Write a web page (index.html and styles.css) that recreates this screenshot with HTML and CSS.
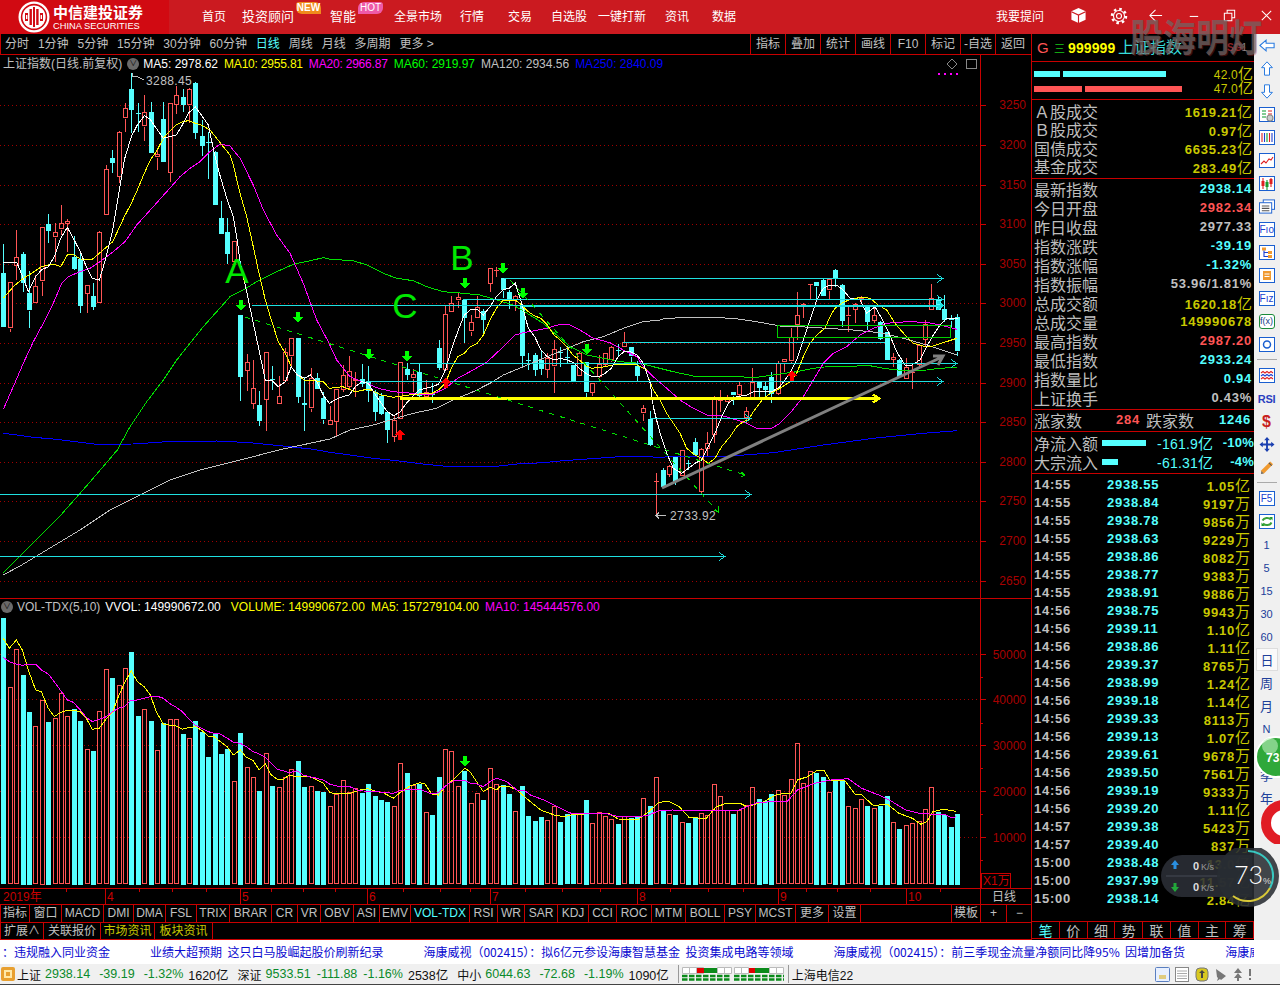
FILE: index.html
```html
<!DOCTYPE html>
<html lang="zh-CN">
<head>
<meta charset="utf-8">
<title>上证指数</title>
<link rel="stylesheet" href="styles.css">
</head>
<body>
<div class="app">
  <header class="topbar">
    <div class="brand">
      <svg class="brand-mark" viewBox="0 0 32 32">
        <circle class="bm-white" cx="16" cy="16" r="15.5"/>
        <circle class="bm-red" cx="16" cy="16" r="13.2"/>
        <circle class="bm-white" cx="16" cy="16" r="11.6"/>
        <path class="bm-red" d="M7 12h3v8H7zM11.5 8h2.4v16h-2.4zM15 6h2v20h-2zM18.2 8h2.4v16h-2.4zM22 12h3v8h-3z"/>
        <path class="bm-white" d="M8 14h1.4v4H8zM22.6 14h1.4v4h-1.4z"/>
      </svg>
      <div class="brand-text">
        <div class="brand-cn">中信建投证券</div>
        <div class="brand-en">CHINA SECURITIES</div>
      </div>
    </div>
    <nav class="nav">
      <a>首页</a>
      <a class="nav-big">投资顾问<span class="badge badge-new">NEW</span></a>
      <a class="nav-big">智能<span class="badge badge-hot">HOT</span></a>
      <a>全景市场</a><a>行情</a><a>交易</a><a>自选股</a><a>一键打新</a><a>资讯</a><a>数据</a>
    </nav>
    <div class="win-tools">
      <span class="ask">我要提问</span>
      <svg class="tool-cube" viewBox="0 0 18 18"><path class="fill-white" d="M9 1l7.5 3.6v8.8L9 17l-7.5-3.6V4.600z"/><path class="line-red" d="M1.500 5L9 8.500 16.500 5M9 8.500V17"/></svg>
      <svg class="tool-gear" viewBox="0 0 18 18"><circle class="gear-teeth" cx="9" cy="9" r="7"/><circle class="line-white" cx="9" cy="9" r="5.500"/><circle class="line-white" cx="9" cy="9" r="2.500"/></svg>
      <svg class="tool-win" viewBox="0 0 16 16"><path class="line-white" d="M15 8H2M8 2L2 8l6 6"/></svg>
      <svg class="tool-win" viewBox="0 0 16 16"><path class="line-white" d="M4 9h9"/></svg>
      <svg class="tool-win" viewBox="0 0 16 16"><path class="line-white" d="M2.500 5.500h8v8h-8zM5.500 5V2.500h8v8H11"/></svg>
      <svg class="tool-win" viewBox="0 0 16 16"><path class="line-white" d="M3 3l10 10M13 3L3 13"/></svg>
    </div>
    <div class="watermark">股海明灯</div>
  </header>

  <div class="workspace">
    <section class="chartcol">
      <div class="toolbar">
        <div class="periods">
          <span>分时</span><span>1分钟</span><span>5分钟</span><span>15分钟</span><span>30分钟</span><span>60分钟</span><span class="on">日线</span><span>周线</span><span>月线</span><span>多周期</span><span>更多 &gt;</span>
        </div>
        <div class="actions">
          <span>指标</span><span>叠加</span><span>统计</span><span>画线</span><span>F10</span><span>标记</span><span>-自选</span><span>返回</span>
        </div>
      </div>

      <div class="pane pane-price">
        <svg id="price" class="chart" viewBox="0 55 1031 544"></svg>
        <div class="legend">
          <span class="c-grey">上证指数(日线.前复权)</span>
          <i class="ball">∨</i>
          <span class="c-white">MA5: 2978.62</span>
          <span class="c-yellow tight">MA10: 2955.81</span>
          <span class="c-magenta tight">MA20: 2966.87</span>
          <span class="c-green">MA60: 2919.97</span>
          <span class="c-grey">MA120: 2934.56</span>
          <span class="c-blue">MA250: 2840.09</span>
        </div>
      </div>

      <div class="pane pane-vol">
        <svg id="vol" class="chart" viewBox="0 599 1031 305"></svg>
        <div class="legend legend-vol">
          <i class="ball">∨</i>
          <span class="c-grey vol-name">VOL-TDX(5,10)</span>
          <span class="c-white">VVOL: 149990672.00</span>
          <span class="c-yellow gap-l">VOLUME: 149990672.00</span>
          <span class="c-yellow">MA5: 157279104.00</span>
          <span class="c-magenta">MA10: 145444576.00</span>
        </div>
      </div>

      <div class="tabs tabs-index">
        <span>指标</span><span>窗口</span><span>MACD</span><span>DMI</span><span>DMA</span><span>FSL</span><span>TRIX</span><span>BRAR</span><span>CR</span><span>VR</span><span>OBV</span><span>ASI</span><span>EMV</span><span class="on">VOL-TDX</span><span>RSI</span><span>WR</span><span>SAR</span><span>KDJ</span><span>CCI</span><span>ROC</span><span>MTM</span><span>BOLL</span><span>PSY</span><span>MCST</span><span>更多</span><span>设置</span><span class="blank"></span><span>模板</span><span>+</span><span>−</span>
      </div>
      <div class="tabs tabs-ext">
        <span>扩展∧</span><span>关联报价</span><span class="warn">市场资讯</span><span class="warn">板块资讯</span>
      </div>
    </section>

    <aside class="quote">
      <div class="q-head">
        <span class="q-g">G</span>
        <span class="q-menu">三</span>
        <span class="q-code">999999</span>
        <span class="q-name">上证指数</span>
        <span class="q-sg">SG<b>1</b></span>
      </div>
      <div class="q-bars">
        <div class="q-barrow">
          <i class="bar bar-c w26"></i><i class="bar bar-c w103"></i><span class="yel">42.0<u>亿</u></span>
        </div>
        <div class="q-barrow">
          <i class="bar bar-r w48"></i><i class="bar bar-r w97"></i><span class="yel">47.0<u>亿</u></span>
        </div>
      </div>
      <div class="q-sec q-sec-a">
        <div class="qr"><label>Ａ股成交</label><span class="yel">1619.21<u>亿</u></span></div>
        <div class="qr"><label>Ｂ股成交</label><span class="yel">0.97<u>亿</u></span></div>
        <div class="qr"><label>国债成交</label><span class="yel">6635.23<u>亿</u></span></div>
        <div class="qr"><label>基金成交</label><span class="yel">283.49<u>亿</u></span></div>
      </div>
      <div class="q-sec q-sec-b">
        <div class="qr"><label>最新指数</label><span class="cya">2938.14</span></div>
        <div class="qr"><label>今日开盘</label><span class="red">2982.34</span></div>
        <div class="qr"><label>昨日收盘</label><span class="gry">2977.33</span></div>
        <div class="qr"><label>指数涨跌</label><span class="cya">-39.19</span></div>
        <div class="qr"><label>指数涨幅</label><span class="cya">-1.32%</span></div>
        <div class="qr"><label>指数振幅</label><span class="gry">53.96/1.81%</span></div>
        <div class="qr"><label>总成交额</label><span class="yel">1620.18<u>亿</u></span></div>
        <div class="qr"><label>总成交量</label><span class="yel">149990678</span></div>
        <div class="qr"><label>最高指数</label><span class="red">2987.20</span></div>
        <div class="qr"><label>最低指数</label><span class="cya">2933.24</span></div>
        <div class="qr"><label>指数量比</label><span class="cya">0.94</span></div>
        <div class="qr"><label>上证换手</label><span class="gry">0.43%</span></div>
      </div>
      <div class="q-sec q-family">
        <label>涨家数</label><span class="red fam-up">284</span><label class="fam-lab">跌家数</label><span class="cya fam-dn">1246</span>
      </div>
      <div class="q-sec q-flow">
        <div class="fr"><label>净流入额</label><i class="bar bar-c w44"></i><span class="cya fv">-161.9<u>亿</u></span><span class="cya fp">-10%</span></div>
        <div class="fr"><label>大宗流入</label><i class="bar bar-c w16"></i><span class="cya fv">-61.31<u>亿</u></span><span class="cya fp">-4%</span></div>
      </div>
      <div class="ticks">
        <div class="tk"><b>14:55</b><em>2938.55</em><span>1.05<u>亿</u></span></div>
        <div class="tk"><b>14:55</b><em>2938.84</em><span>9197<u>万</u></span></div>
        <div class="tk"><b>14:55</b><em>2938.78</em><span>9856<u>万</u></span></div>
        <div class="tk"><b>14:55</b><em>2938.63</em><span>9229<u>万</u></span></div>
        <div class="tk"><b>14:55</b><em>2938.86</em><span>8082<u>万</u></span></div>
        <div class="tk"><b>14:55</b><em>2938.77</em><span>9383<u>万</u></span></div>
        <div class="tk"><b>14:55</b><em>2938.91</em><span>9886<u>万</u></span></div>
        <div class="tk"><b>14:56</b><em>2938.75</em><span>9943<u>万</u></span></div>
        <div class="tk"><b>14:56</b><em>2939.11</em><span>1.10<u>亿</u></span></div>
        <div class="tk"><b>14:56</b><em>2938.86</em><span>1.11<u>亿</u></span></div>
        <div class="tk"><b>14:56</b><em>2939.37</em><span>8765<u>万</u></span></div>
        <div class="tk"><b>14:56</b><em>2938.99</em><span>1.24<u>亿</u></span></div>
        <div class="tk"><b>14:56</b><em>2939.18</em><span>1.14<u>亿</u></span></div>
        <div class="tk"><b>14:56</b><em>2939.33</em><span>8113<u>万</u></span></div>
        <div class="tk"><b>14:56</b><em>2939.13</em><span>1.07<u>亿</u></span></div>
        <div class="tk"><b>14:56</b><em>2939.61</em><span>9678<u>万</u></span></div>
        <div class="tk"><b>14:56</b><em>2939.50</em><span>7561<u>万</u></span></div>
        <div class="tk"><b>14:56</b><em>2939.19</em><span>9333<u>万</u></span></div>
        <div class="tk"><b>14:56</b><em>2939.20</em><span>1.11<u>亿</u></span></div>
        <div class="tk"><b>14:57</b><em>2939.38</em><span>5423<u>万</u></span></div>
        <div class="tk"><b>14:57</b><em>2939.40</em><span>837<u>万</u></span></div>
        <div class="tk"><b>15:00</b><em>2938.48</em><span>13.0<u>亿</u></span></div>
        <div class="tk"><b>15:00</b><em>2937.99</em><span>11.57<u>亿</u></span></div>
        <div class="tk"><b>15:00</b><em>2938.14</em><span>2.84<u>亿</u></span></div>
      </div>
      <div class="q-tabs"><span class="on">笔</span><span>价</span><span>细</span><span>势</span><span>联</span><span>值</span><span>主</span><span>筹</span></div>
    </aside>

    <aside class="rail">
      <div class="ri"><svg class="ic" viewBox="0 0 18 16"><path class="arrow-o" d="M1 8l7-6v3.500h9v5H8V14z"/></svg></div>
      <div class="ri"><svg class="ic" viewBox="0 0 16 18"><path class="arrow-o" d="M8 1l6.500 7H11v9H5V8H1.500z"/></svg></div>
      <div class="ri"><svg class="ic" viewBox="0 0 16 18"><path class="arrow-o" d="M8 17l6.500-7H11V1H5v9H1.500z"/></svg></div>
      <div class="ri"><svg class="ic" viewBox="0 0 16 15"><rect class="box" x=".5" y=".5" width="15" height="14"/><path class="s-green" d="M3 4h4M3 7h4M3 10h4"/><path class="s-red" d="M9 4h4M9 7h4"/><circle class="s-grey" cx="11" cy="11" r="3"/></svg></div>
      <div class="ri"><svg class="ic" viewBox="0 0 16 15"><rect class="box" x=".5" y=".5" width="15" height="14"/><path class="s-red" d="M3 3v9"/><path class="s-blue" d="M5.500 3v9"/><path class="s-green" d="M8 3v9"/><path class="s-red" d="M10.500 3v9"/><path class="s-blue" d="M13 3v9"/></svg></div>
      <div class="ri"><svg class="ic" viewBox="0 0 16 15"><rect class="box" x=".5" y=".5" width="15" height="14"/><path class="s-red" d="M2 11l3-3 2 2 3-4 2 1 2-3"/></svg></div>
      <div class="ri"><svg class="ic" viewBox="0 0 16 15"><rect class="box" x=".5" y=".5" width="15" height="14"/><path class="s-red" d="M4 2v11M12 2v9"/><path class="s-green" d="M8 4v10"/><rect class="f-red" x="2.500" y="5" width="3" height="5"/><rect class="f-green" x="6.500" y="6" width="3" height="5"/><rect class="f-red" x="10.500" y="3" width="3" height="5"/></svg></div>
      <div class="ri"><svg class="ic" viewBox="0 0 17 15"><rect class="box" x="4.500" y=".5" width="12" height="10"/><rect class="box" x=".5" y="3.500" width="13" height="11"/><path class="s-dark" d="M3 7h8M3 9.500h8M3 12h8"/></svg></div>
      <div class="ri"><span class="tbox">Fıo</span></div>
      <div class="ri"><svg class="ic" viewBox="0 0 16 15"><rect class="box" x=".5" y=".5" width="15" height="14"/><rect class="f-orange" x="3" y="2.500" width="4" height="3"/><rect class="f-orange" x="9" y="6" width="4" height="3"/><rect class="f-orange" x="9" y="10" width="4" height="3"/><path class="s-blue" d="M5 5.500v6h4M5 7.500h4"/></svg></div>
      <div class="ri"><svg class="ic" viewBox="0 0 16 15"><rect class="box" x=".5" y=".5" width="15" height="14"/><rect class="f-orange" x="4" y="3" width="8" height="9"/><path class="s-white" d="M5.500 6h5M5.500 8.500h5"/></svg></div>
      <div class="ri"><span class="tbox">Fız</span></div>
      <div class="ri"><span class="tbox tbox-fx">f(x)</span></div>
      <div class="ri"><svg class="ic" viewBox="0 0 16 15"><rect class="box" x=".5" y=".5" width="15" height="14"/><circle class="s-blue-w" cx="8" cy="7.500" r="3.500"/></svg></div>
      <div class="rsep"></div>
      <div class="ri"><svg class="ic" viewBox="0 0 16 15"><rect class="box" x=".5" y=".5" width="15" height="14"/><path class="s-red" d="M2 5l2-1.500 2 1.500 2-1.500 2 1.500 2-1.500 2 1.500"/><path class="s-blue" d="M2 8l2-1.500 2 1.500 2-1.500 2 1.500 2-1.500 2 1.500"/><path class="s-red" d="M2 11l2-1.500 2 1.500 2-1.500 2 1.500 2-1.500 2 1.500"/></svg></div>
      <div class="ri"><span class="rsi">RSI</span></div>
      <div class="ri"><span class="dollar">$</span></div>
      <div class="ri"><svg class="ic" viewBox="0 0 16 16"><path class="f-navy" d="M8 0l3 3.500H9V7h3.500V5L16 8l-3.500 3V9H9v3.500h2L8 16l-3-3.500h2V9H3.500v2L0 8l3.500-3v2H7V3.500H5z"/></svg></div>
      <div class="ri"><svg class="ic" viewBox="0 0 16 16"><path class="f-orange" d="M11.500 1.500l3 3L5 14l-3.500.8.500-3.800z"/><path class="s-dark" d="M10 3l3 3"/><path class="f-grey" d="M1.500 14.800l.4-3 2.800 2.600z"/></svg></div>
      <div class="rsep"></div>
      <div class="ri"><span class="tbox">F5</span></div>
      <div class="ri"><svg class="ic" viewBox="0 0 16 15"><rect class="box" x=".5" y=".5" width="15" height="14"/><path class="s-refresh" d="M3.500 6.500C5 3.500 9.500 3 12 5.500M12.500 8.500C11 11.500 6.500 12 4 9.500"/><path class="f-green" d="M10.500 3h3v3.500zM5.500 12h-3V8.500z"/></svg></div>
      <div class="ri rtxt">1</div>
      <div class="ri rtxt">5</div>
      <div class="ri rtxt">15</div>
      <div class="ri rtxt">30</div>
      <div class="ri rtxt">60</div>
      <div class="ri rtxt rcn rsel">日</div>
      <div class="ri rtxt rcn">周</div>
      <div class="ri rtxt rcn">月</div>
      <div class="ri rtxt">N</div>
      <div class="ri"></div>
      <div class="ri rtxt rcn">季</div>
      <div class="ri rtxt rcn">年</div>
    </aside>
  </div>

  <div class="ticker">
    <div class="ticker-track">
      <span>：违规融入同业资金</span>
      <span>业绩大超预期&nbsp;&nbsp;这只白马股崛起股价刷新纪录</span>
      <span>海康威视（002415）：拟6亿元参设海康智慧基金&nbsp;&nbsp;投资集成电路等领域</span>
      <span>海康威视（002415）：前三季现金流量净额同比降95%&nbsp;&nbsp;因增加备货</span>
      <span>海康威视</span>
    </div>
  </div>

  <footer class="status">
    <svg class="st-logo" viewBox="0 0 14 14"><rect class="st-logo-bg" width="14" height="14" rx="2"/><rect class="st-logo-in" x="3" y="3" width="8" height="8"/><rect class="st-logo-bg" x="5" y="5" width="4" height="4"/></svg>
    <span class="st-k first">上证</span><span class="st-g">2938.14</span><span class="st-g">-39.19</span><span class="st-g">-1.32%</span><span class="st-a">1620亿</span>
    <span class="st-k">深证</span><span class="st-g">9533.51</span><span class="st-g st-n">-111.88</span><span class="st-g st-n">-1.16%</span><span class="st-a">2538亿</span>
    <span class="st-k">中小</span><span class="st-g">6044.63</span><span class="st-g">-72.68</span><span class="st-g">-1.19%</span><span class="st-a">1090亿</span>
    <i class="st-sep"></i>
    <svg class="st-mini" viewBox="0 0 102 16">
      <path class="mini-box" d="M.5 1.500h7v6h-7zM7.500 1.500h7v6h-7zM14.500 1.500h7v6h-7zM35.500 1.500h7v6h-7zM42.500 1.500h7v6h-7zM52.500 1.500h7v6h-7zM59.500 1.500h7v6h-7zM87.500 1.500h7v6h-7zM94.500 1.500h7v6h-7z"/>
      <rect class="mini-red" x="15" y="2" width="7" height="5"/><rect class="mini-green" x="22" y="2" width="13" height="5"/>
      <rect class="mini-red" x="67" y="2" width="6" height="5"/><rect class="mini-green" x="73" y="2" width="14" height="5"/>
      <path class="mini-dash" d="M0 10h49M52 10h50M0 13.500h49M52 13.500h50"/>
    </svg>
    <i class="st-sep st-sep2"></i>
    <span class="st-news">上海电信22</span>
    <div class="st-icons">
      <svg viewBox="0 0 15 15"><rect class="st-doc" x=".5" y=".5" width="14" height="14" rx="1"/><path class="st-mark" d="M4 9h7M4 11h7"/></svg>
      <svg viewBox="0 0 15 15"><rect class="st-page" x=".5" y=".5" width="13" height="14"/><path class="st-rule" d="M2 4h10M2 6.500h10M2 9h10M2 11.500h10"/></svg>
      <svg viewBox="0 0 14 15"><rect class="st-coin" x="1" y="1" width="12" height="13" rx="4"/><path class="st-coin-in" d="M7 3l3 3H8v5H6V6H4z"/></svg>
      <svg viewBox="0 0 14 15"><path class="st-dish" d="M2 2l10 7-5 4-1-1-3 2 1-3-1-1z"/></svg>
      <svg viewBox="0 0 10 15"><path class="st-dish" d="M5 1l4 5H1zM5 6l4 5H1zM4 11h2v3H4z"/></svg>
      <svg viewBox="0 0 4 15"><path class="st-dish" d="M1 2h2v7H1zM1 11h2v2H1z"/></svg>
    </div>
  </footer>

  <svg class="netmeter" viewBox="0 0 120 62">
    <path class="nm-pill" d="M22 7h70v42H22a21 21 0 0 1 0-42z"/>
    <path class="nm-div" d="M6 28h54"/>
    <path class="nm-up" d="M15 12l4 5h-2.500v4h-3v-4H11z"/>
    <path class="nm-dn" d="M15 44l4-5h-2.500v-4h-3v4H11z"/>
    <text class="nm-num" x="33" y="22">0</text><text class="nm-unit" x="41" y="22">K/s</text>
    <text class="nm-num" x="33" y="43">0</text><text class="nm-unit" x="41" y="43">K/s</text>
    <circle class="nm-disc" cx="88" cy="28" r="31"/>
    <path class="nm-arc-c" d="M88 3a25 25 0 0 1 22 37"/>
    <path class="nm-arc-y" d="M110 40a25 25 0 0 1-37 8"/>
    <text class="nm-big" x="74" y="36">73</text><text class="nm-pct" x="103" y="36">%</text>
  </svg>
  <svg class="railball" viewBox="0 0 26 110">
    <circle class="rb-green" cx="22" cy="23" r="20"/>
    <circle class="rb-gloss" cx="16" cy="12" r="8"/>
    <text class="rb-txt" x="12" y="28">73</text>
    <circle class="rb-red" cx="30" cy="89" r="18"/>
  </svg>
</div>
<script src="script.js"></script>
</body>
</html>
```
FILE: styles.css
```css
* { box-sizing: border-box; }
html, body { margin: 0; padding: 0; background: #000; }
body { font-family: "Liberation Sans", "Noto Sans CJK SC", sans-serif; font-size: 12px; color: #c0c0c0; }
.app { position: relative; width: 1280px; height: 985px; overflow: hidden; display: flex; flex-direction: column; }
i, em { font-style: normal; }
u { text-decoration: none; }

/* top bar */
.topbar { position: relative; height: 34px; flex: none; display: flex; background: #cb1a20; color: #fff; }
.brand { width: 169px; background: #d10a12; display: flex; padding-left: 18px; gap: 3px; align-items: center; }
.brand-mark { width: 32px; height: 32px; }
.bm-white { fill: #fff; }
.bm-red { fill: #d10a12; }
.brand-cn { font-size: 15px; line-height: 18px; font-weight: 700; white-space: nowrap; font-family: "Noto Sans CJK SC", sans-serif; }
.brand-en { font-size: 9.300px; line-height: 11px; white-space: nowrap; }
.nav { margin-left: 33px; padding-bottom: 3px; display: grid; grid-template-columns: 40px 88px 64px 66px 48px 43px 47px 67px 47px 30px; align-items: center; }
.nav a { position: relative; font-size: 12px; white-space: nowrap; }
.nav-big { font-size: 13px !important; }
.badge { position: absolute; top: -4px; left: 54px; width: 25px; height: 12px; border-radius: 3px 6px 0 6px; font-size: 10px; line-height: 12px; text-align: center; font-weight: 700; }
.badge-new { background: #f08a1c; }
.badge-hot { left: 28px; background: #ee5aa8; border-radius: 6px 3px 6px 0; font-weight: 400; }
.win-tools { margin-left: auto; width: 284px; display: grid; grid-template-columns: 74px 40px 38px 38px 36px 37px 21px; align-items: center; justify-items: start; }
.ask { font-size: 12px; white-space: nowrap; margin-top: -3px; }
.win-tools svg { display: block; margin-top: -3px; }
.tool-cube { width: 17px; height: 17px; }
.tool-gear { width: 18px; height: 18px; }
.tool-win { width: 15px; height: 15px; }
.fill-white { fill: #fff; }
.line-red { fill: none; stroke: #cb1a20; stroke-width: 1.200; }
.line-white { fill: none; stroke: #fff; stroke-width: 1.100; }
.gear-teeth { fill: none; stroke: #fff; stroke-width: 2.500; stroke-dasharray: 2.500 3; }
.watermark { position: absolute; left: 1130px; top: 11px; font-family: "Noto Sans CJK SC", sans-serif; font-size: 33px; line-height: 48px; font-weight: 700; color: rgba(110, 105, 105, .7); white-space: nowrap; text-shadow: 1px 1px 0 rgba(170, 40, 40, .35); z-index: 5; transform: scaleY(1.15); }

/* workspace */
.workspace { flex: none; height: 906px; display: flex; background: #000; }
.chartcol { width: 1032px; flex: none; display: flex; flex-direction: column; border-right: 1px solid #c80000; }
.toolbar { height: 21px; flex: none; display: flex; justify-content: space-between; border-bottom: 1px solid #c80000; border-left: 1px solid #c80000; }
.periods { display: flex; gap: 8.900px; padding-left: 4px; align-items: center; white-space: nowrap; line-height: 20px; }
.on { color: #55ffff !important; }
.actions { display: grid; grid-template-columns: repeat(8, 35px); width: 281px; }
.actions span { border-left: 1px solid #c80000; text-align: center; line-height: 20px; white-space: nowrap; }
.pane { position: relative; flex: none; }
.pane-price { height: 544px; }
.pane-vol { height: 305px; }
.chart { display: block; width: 1031px; height: 100%; shape-rendering: crispEdges; }
.legend { position: absolute; top: 0; left: 3px; display: flex; gap: 6px; line-height: 18px; white-space: nowrap; align-items: center; }
.legend-vol { left: 2px; line-height: 16px; gap: 6px; }
.tight { letter-spacing: -.2px; }
.vol-name { margin-right: -1px; }
.gap-l { margin-left: 4px; }
.ball { width: 12px; height: 12px; border-radius: 50%; background: #6a6a6a; color: #111; font-size: 8px; line-height: 12px; text-align: center; margin-left: -1px; margin-right: -2px; }
.c-grey { color: #c0c0c0; }
.c-white { color: #fff; }
.c-yellow { color: #ffff00; }
.c-magenta { color: #ff00ff; }
.c-green { color: #00ff00; }
.c-blue { color: #0000ff; }

.tabs { height: 18px; flex: none; display: grid; border-bottom: 1px solid #c80000; line-height: 17px; text-align: center; white-space: nowrap; border-left: 1px solid #c80000; }
.tabs span { border-right: 1px solid #c80000; }
.tabs-index { grid-template-columns: 29px 32px 42px 30px 32px 31px 33px 42px 26px 23px 33px 26px 31px 59px 28px 27px 33px 31px 28px 35px 34px 39px 31px 40px 33px 32px 91px 29px 26px 25px; border-top: 1px solid #c80000; border-bottom: 0; line-height: 17px; }
.tabs-index .blank { border-right-color: #c80000; }
.tabs-index span:last-child { border-right: 0; }
.tabs-ext { grid-template-columns: 43px 57px 54px 58px; border-top: 1px solid #c80000; }
.warn { color: #c8c800; }

/* quote panel */
.quote { width: 222px; flex: none; display: flex; flex-direction: column; }
.q-head { height: 28px; flex: none; display: flex; align-items: center; border-bottom: 1px solid #c80000; padding-left: 5px; position: relative; }
.q-g { color: #ff5555; font-size: 15px; width: 17px; }
.q-menu { color: #19c719; font-size: 11px; width: 14px; }
.q-code { color: #ffff00; font-weight: 700; font-size: 14px; width: 50px; letter-spacing: .1px; }
.q-name { color: #36dcdc; font-size: 16px; white-space: nowrap; margin-top: -4px; }
.q-sg { position: absolute; left: 195px; top: 8px; color: #8a2226; font-weight: 700; font-size: 10px; }
.q-sg b { color: #888; font-weight: 400; }
.q-bars { height: 38px; flex: none; border-bottom: 1px solid #c80000; padding: 4px 1px 0 2px; display: flex; flex-direction: column; gap: 0; }
.q-barrow { position: relative; height: 15px; display: flex; align-items: center; gap: 3px; }
.q-barrow .yel { position: absolute; right: 0; top: -1px; font-size: 12px; font-weight: 400; letter-spacing: .2px; line-height: 15px; }
.q-barrow:last-child .yel { top: -2px; }
.q-barrow u { font-size: 13px; }
.bar { display: block; height: 6px; flex: none; }
.bar-c { background: #55ffff; }
.bar-r { background: #ff5555; }
.w26 { width: 26px; } .w103 { width: 103px; } .w48 { width: 48px; } .w97 { width: 97px; } .w44 { width: 44px; } .w16 { width: 16px; }
.q-sec { flex: none; border-bottom: 1px solid #c80000; }
.q-sec-a { height: 79px; padding-top: 1.500px; }
.q-sec-a .qr { height: 18.500px; }
.q-sec-b { height: 231px; padding-top: 0; }
.q-sec-b .qr { height: 19px; }
.qr { display: flex; justify-content: space-between; align-items: center; padding: 0 2px 0 2px; white-space: nowrap; }
label { font-size: 16px; color: #bdbdbd; line-height: 18px; font-family: "Noto Sans CJK SC", sans-serif; font-weight: 400; }
.yel, .cya, .red, .gry { font-weight: 700; font-size: 13px; letter-spacing: .75px; }
.yel u, .cya u { font-size: 15px; font-weight: 400; letter-spacing: 0; font-family: "Noto Sans CJK SC", sans-serif; }
.yel { color: #c8c800; }
.cya { color: #55ffff; }
.red { color: #ff5555; }
.gry { color: #c0c0c0; }
.q-family { height: 22px; display: flex; align-items: center; padding: 0 0 2px 2px; position: relative; }
.fam-up { margin-left: 34px; width: 30px; }
.fam-lab { margin-left: 0; }
.fam-dn { margin-left: auto; margin-right: 3px; }
.q-flow { height: 42px; padding: 0 1px 0 2px; }
.fr { height: 19px; display: grid; grid-template-columns: 68px 54px 57px 41px; align-items: center; white-space: nowrap; }
.fv, .fp { text-align: right; font-weight: 400; font-size: 14px; letter-spacing: .2px; }
.fp { font-weight: 700; font-size: 13px; }
.ticks { flex: none; height: 447px; padding-bottom: 1px; }
.tk { height: 18px; display: grid; grid-template-columns: 73px 51px 1fr; align-items: center; padding: 0 4px 1px 2px; white-space: nowrap; font-weight: 700; font-size: 13px; letter-spacing: .75px; }
.tk b { color: #c0c0c0; }
.tk em { color: #55ffff; }
.tk span { text-align: right; color: #c8c800; }
.tk u { font-size: 15px; font-weight: 400; letter-spacing: 0; font-family: "Noto Sans CJK SC", sans-serif; }
.q-tabs { flex: none; height: 18px; display: grid; grid-template-columns: repeat(8, 1fr); border-top: 1px solid #c80000; border-bottom: 1px solid #c80000; }
.q-tabs span { border-right: 1px solid #c80000; text-align: center; font-size: 14px; line-height: 16px; font-family: "Noto Sans CJK SC", sans-serif; }

/* right rail */
.rail { width: 26px; flex: none; background: #f0f0f0; display: flex; flex-direction: column; }
.ri { height: 23px; flex: none; display: flex; align-items: center; justify-content: center; margin-left: -1px; }
.rsep { height: 8px; flex: none; position: relative; }
.rsep::after { content: ""; position: absolute; left: 3px; right: 3px; top: 3px; height: 1px; background: #aaa; }
.ic { width: 16px; height: 15px; display: block; }
.arrow-o { fill: #fff; stroke: #2b7ce0; stroke-width: 1.200; }
.box { fill: #fff; stroke: #1a5fd0; stroke-width: 1; }
.s-green, .s-red, .s-blue, .s-grey, .s-dark, .s-white, .s-refresh, .s-blue-w { fill: none; stroke-width: 1.100; }
.s-green { stroke: #0a9a2a; }
.s-red { stroke: #e02020; }
.s-blue { stroke: #1a3fd0; }
.s-grey { stroke: #888; fill: #ccc; }
.s-dark { stroke: #555; }
.s-white { stroke: #fff; }
.s-refresh { stroke: #3aa03a; stroke-width: 2; }
.s-blue-w { stroke: #1a5fd0; stroke-width: 1.500; }
.f-red { fill: #e02020; }
.f-green { fill: #1a9a2a; }
.f-orange { fill: #f09a30; }
.f-navy { fill: #1a3fb0; }
.f-grey { fill: #777; }
.tbox { display: block; width: 16px; height: 15px; background: #fff; border: 1px solid #1a5fd0; color: #1a3fd0; font-size: 10px; line-height: 13px; text-align: center; white-space: nowrap; }
.tbox-fx { border-color: #1a8a3a; border-radius: 3px; color: #123a88; font-size: 9px; }
.rsi { color: #2a3fc0; font-size: 11px; font-weight: 700; letter-spacing: -.3px; }
.dollar { color: #c8201c; font-size: 16px; font-weight: 700; line-height: 16px; }
.rtxt { color: #20409a; font-size: 11px; }
.rcn { font-size: 13px; font-family: "Noto Sans CJK SC", sans-serif; }
.rsel { background: #fafafa; margin: 0 2px; border: 1px solid #ddd; }

/* bottom */
.ticker { flex: none; height: 24px; width: 100%; background: #fff; }
.ticker-track { width: 1254px; color: #0a0ad0; display: flex; gap: 40px; padding-left: 2px; line-height: 24px; white-space: nowrap; overflow: hidden; font-family: "Noto Sans CJK SC", sans-serif; }
.status { flex: none; height: 21px; background: #f0f0f0; border-bottom: 1px solid #444; display: flex; align-items: center; padding-left: 1px; gap: 9px; white-space: nowrap; color: #111; }
.st-logo { width: 14px; height: 14px; flex: none; margin-right: -7px; }
.st-logo-bg { fill: #e8a030; }
.st-logo-in { fill: #ffe9a8; }
.st-k { color: #111; margin-right: -5px; }
.st-k.first { margin-left: 0; }
.st-g { color: #0a8a2a; font-size: 12.500px; }
.st-n { margin-left: -3px; }
.st-a { color: #111; margin-left: -4px; font-size: 12.500px; }
.st-sep { width: 1px; height: 18px; background: #999; flex: none; margin: 0 -6px 0 0; }
.st-sep2 { margin: 0 -6px 0 -5px; }
.st-mini { width: 102px; height: 16px; flex: none; }
.mini-box { fill: #fff; stroke: #bbb; stroke-width: 1; }
.mini-red { fill: #e00000; }
.mini-green { fill: #0a8a1a; }
.mini-dash { fill: none; stroke: #0a8a1a; stroke-width: 2.400; stroke-dasharray: 5.500 1.500; }
.st-news { font-size: 12px; }
.st-icons { margin-left: 293px; display: flex; align-items: center; gap: 5px; }
.st-icons svg { height: 15px; width: auto; display: block; }
.st-doc { fill: #e8f0ff; stroke: #5a7fc0; }
.st-mark { stroke: #d8a800; fill: none; }
.st-page { fill: #fff; stroke: #888; }
.st-rule { stroke: #aaa; fill: none; }
.st-coin { fill: #d8c820; stroke: #777; }
.st-coin-in { fill: #444; }
.st-dish { fill: #777; }

/* overlays */
.netmeter { position: absolute; left: 1160px; top: 848px; width: 120px; height: 62px; z-index: 6; }
.nm-pill { fill: rgba(44, 48, 56, .86); }
.nm-div { stroke: #444a55; fill: none; }
.nm-up { fill: #2a8fe0; }
.nm-dn { fill: #22a83a; }
.nm-num { fill: #ddd; font-size: 11px; font-weight: 700; }
.nm-unit { fill: #999; font-size: 9px; }
.nm-disc { fill: rgba(40, 44, 50, .88); }
.nm-arc-c { fill: none; stroke: #38c8c0; stroke-width: 2; }
.nm-arc-y { fill: none; stroke: #d8c838; stroke-width: 2; }
.nm-big { fill: #fff; font-size: 25px; font-family: "Lato", "Liberation Sans", sans-serif; font-weight: 300; }
.nm-pct { fill: #ddd; font-size: 9px; }
.railball { position: absolute; left: 1254px; top: 734px; width: 26px; height: 110px; z-index: 4; }
.rb-green { fill: #2fa83a; stroke: #fff; stroke-width: 2; }
.rb-gloss { fill: rgba(190, 240, 190, .6); }
.rb-txt { fill: #fff; font-size: 12px; font-weight: 700; }
.rb-red { fill: #fff; stroke: #e01c24; stroke-width: 10; }

/* chart marks */
.frame { stroke: #c80000; fill: none; }
.grid { stroke: #a00000; stroke-dasharray: 1 3; fill: none; }
.tick { stroke: #c80000; fill: none; }
.axis-label { fill: #a80000; font-size: 12px; }
.time-label { fill: #c80000; font-size: 12px; }
.unit-box { stroke: #c80000; fill: none; }
.axis-plain { fill: #c0c0c0; font-size: 12px; font-family: "Noto Sans CJK SC", sans-serif; }
.up { stroke: #ff5555; fill: none; }
.dn { stroke: none; fill: #55ffff; }
.wick-up { stroke: #ff5555; fill: none; }
.wick-dn { stroke: #55ffff; fill: none; }
.ma { fill: none; stroke-width: 1; }
.ma5 { stroke: #fff; }
.ma10 { stroke: #ffff00; }
.ma20 { stroke: #ff00ff; }
.ma60 { stroke: #00e000; }
.ma120 { stroke: #c0c0c0; }
.ma250 { stroke: #0000ff; }
.ray { stroke: #1fe0e0; fill: none; }
.ray-heavy { stroke: #1fe0e0; fill: none; stroke-width: 2; }
.ray-yellow { stroke: #ffff00; fill: none; stroke-width: 2.600; }
.ray-grey { stroke: #808080; fill: none; stroke-width: 3; shape-rendering: auto; }
.ray-dash { stroke: #00e000; fill: none; stroke-dasharray: 5 6; }
.ray-head { stroke: #00e000; fill: none; }
.box-green { stroke: #00d000; fill: none; }
.mark-dn { fill: #00ff00; }
.mark-up { fill: #ff0000; }
.letter { fill: #00e800; font-size: 35px; text-anchor: middle; shape-rendering: auto; }
.extreme { fill: #c0c0c0; font-size: 12px; letter-spacing: .4px; }
.extreme-line { stroke: #c0c0c0; fill: none; }
.dot { fill: #ff00ff; }
.diamond { stroke: #888; fill: none; }
```
FILE: script.js
```js
(function () {
  var NS = "http://www.w3.org/2000/svg";
  function add(parent, tag, attrs, text) {
    var n = document.createElementNS(NS, tag);
    for (var k in attrs) n.setAttribute(k, attrs[k]);
    if (text !== undefined) n.textContent = text;
    parent.appendChild(n);
    return n;
  }
  var price = document.getElementById("price");
  var vol = document.getElementById("vol");
  var cx = function (i) { return Math.round(3.3 + 6.4 * i); };

  /* reference-crop coordinate frames */
  var F = {
    a: function (x, y) { return [x / 3, 70 + y / 3]; },
    b: function (x, y) { return [330 + x / 3, 240 + y / 3]; },
    c: function (x, y) { return [640 + x / 3, 260 + y / 3]; },
    p: function (x, y) { return [x, y]; },
    v: function (x, y) { return [x / 3, 600 + y / 3]; },
    w: function (x, y) { return [500 + x / 2.958, 600 + y / 3]; }
  };
  function pts(frame, s) {
    return s.trim().split(/\s+/).map(function (t) {
      var q = t.split(",");
      var r = F[frame](+q[0], +q[1]);
      return r[0].toFixed(1) + "," + r[1].toFixed(1);
    }).join(" ");
  }
  function line(svg, cls, parts) {
    var s = parts.map(function (p) { return pts(p[0], p[1]); }).join(" ");
    add(svg, "polyline", { "class": cls, points: s });
  }

  /* volume: type + top in crop units */
  var volA = "c55 r262 r148 c225 c336 r379 r300 c366 r355 r280 r349 c327 c363 r448 c453 r334 r208 c234 r256 r205 c156 c348 r328 c363 r451 c370 r358 r358 c402 r415 c363 c396 c471 c402 c462 c447 r544 c399 r502 r532 c573 r460 c558 r562 r532 r508 c483 c561 r559 c573 c576 r619 r583 r541 r577 r565 c579 c552 c588 c600 c606 r619 r490 c519 r556 c552 r637 c645 c531 r448 r454 r559 c513 r610 r580 c600 r505 r553 " +
    "c555 c582 r634 c558 c648 c663 c651 r661 r619 c666 c643 c643 r643 c600 r670 r637 r649 r658 c672 r649 c655 c652 r595 c618 r532 c634 r643 c645 r667 c669 c651 r640 r646 r553 r589 r631 c642 r631 r616 r562 c597 c604 c582 r571 r586 r538 r430 r550 r514 c519 c531 r577 c543 c540 r619 r625 r598 c618 r625 c618 c588 r667 c687 r676 r670 r664 r628 r562 c636 c645 c681 c642";
  var volList = volA.trim().split(/\s+/);
  var types = volList.map(function (t) { return t[0]; });

  /* candles: top,bottom,high,low in crop units */
  var cA = "608,770,522,770 637,776,637,785 560,586,480,630 552,640,546,665 670,722,603,773 649,700,615,700 472,635,472,677 462,483,432,518 487,503,460,575 460,479,405,495 454,463,447,545 561,597,497,600 567,708,550,728 646,673,646,728 678,710,640,720 487,700,484,700 298,437,285,437 264,278,240,308 186,322,183,340 115,146,100,185 57,120,10,190 129,131,100,185 127,170,75,213 126,248,97,250 253,263,240,300 148,278,97,280 100,310,100,335 76,106,48,132 81,105,58,125 58,107,53,160 39,188,37,208 198,227,150,258 216,220,185,327 246,404,243,405 445,494,393,495 487,552,445,582 514,578,514,580 735,920,735,992 877,904,852,962 955,1003,870,1016 1005,1052,963,1068 847,991,845,1082 928,930,888,960 979,1003,918,1003 845,932,835,932 805,860,805,895 804,980,804,998 1000,1006,920,1082 925,1016,895,1025 925,957,908,958 985,1049,965,1063 1050,1064,1008,1064";
  var cB = "447,545,447,588 406,450,375,456 394,442,348,450 416,423,395,470 418,432,372,440 424,453,378,485 456,515,450,543 467,520,460,525 516,571,516,610 540,590,525,605 367,538,367,538 387,404,370,420 403,416,388,456 397,468,370,470 457,472,420,480 463,466,430,488 324,384,300,390 223,390,198,390 188,214,168,216 172,182,160,203 180,234,178,310 247,275,225,288 200,232,168,235 212,240,208,280 85,133,85,155 90,92,82,110 115,152,115,175 155,178,150,208 167,178,165,212 198,347,198,380 360,363,340,390 346,390,340,408 360,387,330,405 355,391,340,413 328,380,300,458 336,338,320,380 350,352,318,372 375,423,375,423 338,407,335,407 367,458,365,470 430,460,430,468 372,412,345,414 340,375,340,378 322,362,318,365 330,332,312,347 305,320,277,322 322,350,322,365 378,408,362,425 505,521,495,543 537,614,513,617";
  var cC = "663,664,640,765 630,680,625,682 619,645,615,650 592,667,590,675 571,650,570,652 610,612,600,630 547,585,535,590 568,697,565,700 550,568,515,590 410,525,408,550 420,422,390,455 415,428,405,430 397,407,397,435 375,404,365,410 453,473,440,490 365,418,323,420 365,384,362,412 378,390,365,415 350,400,335,428 310,402,302,405 298,308,298,335 232,305,205,310 165,195,97,240 132,134,130,175 73,75,72,118 67,80,65,118 60,108,58,108 58,92,57,118 30,55,28,80 75,183,73,200 166,170,140,215 132,150,130,190 113,120,108,125 140,185,135,210 165,183,140,190 185,235,183,240 217,300,215,300 292,300,280,320 300,350,298,352 320,357,293,358 335,340,315,387 255,315,255,320 193,240,180,262 113,148,72,150 118,150,108,150 148,180,105,185 178,182,165,200 172,275,163,287";

  function body(svg, type, c, top, bot) {
    if (type === "c") {
      add(svg, "rect", { "class": "dn", x: c - 2, y: Math.round(top), width: 5, height: Math.max(1, Math.round(bot - top)) });
    } else if (bot - top < 2) {
      add(svg, "path", { "class": "up", d: "M" + (c - 2) + " " + (Math.round(top) + .5) + "h5" });
    } else {
      add(svg, "rect", { "class": "up", x: c - 1.5, y: Math.round(top) + .5, width: 4, height: Math.max(1, Math.round(bot - top) - 1) });
    }
  }

  /* frame and grid of the price pane */
  [3250, 3200, 3150, 3100, 3050, 3000, 2950, 2900, 2850, 2800, 2750, 2700, 2650].forEach(function (p, i) {
    var y = [105, 145, 185, 224, 264, 303, 343, 383, 422, 462, 501, 541, 581][i];
    add(price, "path", { "class": "grid", d: "M0 " + (y + .5) + "H980" });
    add(price, "path", { "class": "tick", d: "M980 " + (y + .5) + "h6" });
    add(price, "text", { "class": "axis-label", x: 1026, y: y + 4, "text-anchor": "end" }, String(p));
  });
  add(price, "path", { "class": "frame", d: "M980.500 55V599M0 598.500H1031" });

  /* candles */
  function candles(frame, data, start) {
    data.split(" ").forEach(function (s, k) {
      var v = s.split(",").map(Number), i = start + k, t = types[i], c = cx(i);
      var top = F[frame](0, v[0])[1], bot = F[frame](0, v[1])[1], hi = F[frame](0, v[2])[1], lo = F[frame](0, v[3])[1];
      var cls = t === "c" ? "wick-dn" : "wick-up";
      add(price, "path", {
        "class": cls,
        d: "M" + (c + .5) + " " + Math.round(hi) + "V" + Math.round(top) + "M" + (c + .5) + " " + Math.round(bot) + "V" + Math.round(lo)
      });
      body(price, t, c, top, bot);
    });
  }
  candles("a", cA, 0);
  candles("b", cB, 52);
  candles("c", cC, 102);

  /* moving averages */
  line(price, "ma ma250", [["a", "10,1090 50,1095 100,1102 170,1108 290,1123 400,1122 500,1115 650,1113 750,1118 850,1128 940,1138"], ["b", "0,637 60,645 130,655 200,662 280,672 360,680 490,680 560,672 640,668 700,662 800,655 900,648 990,652"], ["c", "90,590 250,590 400,578 550,555 700,535 850,520 950,512"]]);
  line(price, "ma ma120", [["p", "3,575 20,566 50,548 80,530 110,510 140,495 170,480 200,470 240,460 283,449"], ["b", "0,597 60,570 130,555 190,537 250,520 320,505 370,480 430,455 480,430 520,405 580,380 640,355 700,330 760,305 820,290 880,265 940,245 990,240"], ["c", "60,178 130,172 200,172 280,175 350,185 420,198 480,200 560,205 640,210 720,218 790,235 860,255 950,285"]]);
  line(price, "ma ma60", [["p", "3,573 30,546 60,516 90,482"], ["a", "352,1140 390,1070 440,995 490,930 530,870 570,820 610,770 650,725 690,680 730,660 770,635 830,605 880,583 930,572 970,563 990,568"], ["b", "70,62 110,75 160,100 200,115 250,122 290,140 340,155 400,160 450,165 500,180 550,195 600,225 640,250 680,285 720,320 770,345 820,355 870,365 930,370"], ["c", "40,320 100,335 170,350 270,350 350,352 420,342 470,335 520,325 580,318 650,318 690,317 730,325 800,333 860,330 900,325 950,322"]]);
  line(price, "ma ma20", [["a", "10,1018 40,950 70,880 100,815 130,760 160,700 185,640 205,620 240,605 270,595 300,575 340,545 375,515 410,465 460,410 500,365 540,320 570,295 600,275 630,245 660,222 690,228 720,265 760,345 790,420 830,495 870,550 910,640 950,750 985,815"], ["b", "20,360 40,385 60,410 95,425 115,430 133,440 154,447 190,455 229,458 268,463 310,462 346,445 383,415 420,395 470,367 520,320 556,285 580,278 615,272 650,265 690,253 715,253 750,270 790,295 840,308 880,330 921,350"], ["c", "10,320 40,350 80,385 120,420 160,445 200,465 250,468 290,480 320,490 350,505 395,505 420,490 450,460 490,410 520,360 550,310 580,280 620,260 660,225 700,205 740,190 800,185 860,187 900,195 950,208"]]);
  line(price, "ma ma10", [["a", "10,685 40,650 70,625 95,610 124,590 145,585 163,583 182,590 202,555 220,553 241,567 277,568 298,550 338,515 373,440 394,400 412,360 433,310 451,270 469,245 490,205 508,185 529,165 547,155 565,152 586,160 604,165 630,180 650,205 670,230 690,255 700,285 720,370 740,440 760,530 775,600 796,690 814,750 835,815 856,850 874,890 892,915 913,930 950,933 970,935 988,955"], ["b", "38,440 76,455 115,447 154,465 190,472 229,466 268,462 306,460 325,450 346,430 364,385 383,350 403,340 421,320 442,310 460,285 480,240 499,205 518,182 537,182 556,180 575,195 595,215 614,228 633,235 652,255 672,285 691,300 710,320 729,345 748,360 768,378 786,385 825,380 864,372 880,372 921,375 950,390"], ["c", "20,340 40,390 60,420 80,460 100,490 120,520 140,565 165,585 185,595 205,610 225,595 245,560 270,530 290,500 310,485 325,480 340,455 370,415 400,395 420,385 450,365 470,340 490,290 510,250 530,225 555,205 570,170 585,145 605,130 630,118 665,112 690,115 715,135 740,150 765,190 795,225 820,250 850,258 880,258 910,248 950,235"]]);
  line(price, "ma ma5", [["a", "10,577 50,577 70,625 85,665 107,620 124,600 145,590 163,560 182,505 202,472 220,505 241,545 259,590 277,625 298,630 316,570 338,480 355,380 373,270 394,200 412,165 433,137 451,148 469,175 490,205 508,200 529,195 547,165 565,130 586,110 604,135 625,165 643,250 661,320 682,390 700,440 710,500 721,580 739,660 760,760 775,830 796,930 814,930 835,950 856,935 874,890 892,915 913,925 931,915 950,935 970,975 988,1000"], ["b", "18,478 38,470 58,465 76,440 95,425 115,430 133,460 154,490 172,515 191,527 211,515 229,490 250,467 268,450 287,445 306,440 325,433 346,390 364,330 383,275 403,225 421,210 442,208 460,225 480,200 499,170 518,150 537,145 556,130 575,190 595,265 614,290 633,330 652,350 672,360 691,355 710,360 729,367 748,385 768,400 786,410 806,410 825,400 844,385 864,350 882,335 902,335 921,345 940,370 961,430"], ["c", "40,440 60,520 80,580 100,625 125,640 145,625 165,610 185,600 205,560 225,520 245,470 265,430 290,410 320,405 340,395 370,395 395,395 420,380 450,340 470,300 490,240 510,180 530,120 550,85 570,75 590,75 610,90 630,115 660,120 680,160 705,140 725,175 745,215 770,275 795,315 815,315 840,300 860,260 880,225 900,195 920,175 940,175 955,175"]]);

  /* drawn trend lines and rays */
  function ray(cls, x1, y, x2) {
    add(price, "path", { "class": cls, d: "M" + x1 + " " + (y + .5) + "H" + x2 + "m-6 -4l6 4l-6 4" });
  }
  ray("ray", 0, 494, 751);
  ray("ray", 0, 556, 725);
  ray("ray", 504, 278, 943);
  ray("ray", 463, 299, 943);
  add(price, "path", { "class": "ray", d: "M252 305.500H523" });
  ray("ray-heavy", 523, 305, 943);
  add(price, "path", { "class": "ray", d: "M623 342.500H885" });
  ray("ray", 410, 363, 957);
  ray("ray", 366, 381, 943);
  ray("ray", 650, 418, 751);
  ray("ray-yellow", 400, 398, 879);
  add(price, "rect", { "class": "box-green", x: 777.5, y: 325.5, width: 173, height: 12 });
  add(price, "path", { "class": "ray-dash", d: "M245 317L745 475" });
  add(price, "path", { "class": "ray-dash", d: "M510 280L718 512" });
  add(price, "path", { "class": "ray-head", d: "M741 472l4 3-4 2M718 506l0 6-4-2" });
  add(price, "path", { "class": "ray-grey", d: "M662 488L942 357M933 356l10 0l-5 9" });

  function mark(svg, x, y, down) {
    var d = down
      ? [[x - 2, y - 6], [x + 2, y - 6], [x + 2, y - 1], [x + 5, y - 1], [x, y + 5], [x - 5, y - 1], [x - 2, y - 1]]
      : [[x - 2, y + 6], [x + 2, y + 6], [x + 2, y + 1], [x + 5, y + 1], [x, y - 5], [x - 5, y + 1], [x - 2, y + 1]];
    add(svg, "polygon", { "class": down ? "mark-dn" : "mark-up", points: d.map(function (p) { return p.join(","); }).join(" ") });
  }
  [[241, 306], [298, 318], [369, 355], [407, 357], [465, 284], [503, 269], [523, 294], [587, 350]].forEach(function (m) { mark(price, m[0], m[1], true); });
  [[400, 434], [446, 382], [792, 375]].forEach(function (m) { mark(price, m[0], m[1], false); });

  add(price, "text", { "class": "letter", x: 237, y: 283 }, "A");
  add(price, "text", { "class": "letter", x: 462, y: 270 }, "B");
  add(price, "text", { "class": "letter", x: 405, y: 318 }, "C");

  add(price, "path", { "class": "extreme-line", d: "M132 73v3h4l8 4" });
  add(price, "text", { "class": "extreme", x: 146, y: 85 }, "3288.45");
  add(price, "path", { "class": "extreme-line", d: "M666 515.500H656m3 -3l-3 3l3 3" });
  add(price, "text", { "class": "extreme", x: 670, y: 520 }, "2733.92");

  /* small symbols beside the legend */
  add(price, "path", { "class": "diamond", d: "M952 59l5 5-5 5-5-5z" });
  add(price, "rect", { "class": "diamond", x: 966.5, y: 59.5, width: 10, height: 9, rx: 1 });
  [938, 944, 950, 956].forEach(function (x) { add(price, "rect", { "class": "dot", x: x, y: 73, width: 2, height: 2 }); });

  /* volume pane */
  [[50000, 654], [40000, 699], [30000, 745], [20000, 791], [10000, 837]].forEach(function (g) {
    add(vol, "path", { "class": "grid", d: "M0 " + (g[1] + .5) + "H980" });
    add(vol, "path", { "class": "tick", d: "M980 " + (g[1] + .5) + "h6" });
    add(vol, "text", { "class": "axis-label", x: 1026, y: g[1] + 5, "text-anchor": "end" }, String(g[0]));
  });
  [677, 723, 768, 814, 860].forEach(function (y) { add(vol, "path", { "class": "tick", d: "M980 " + (y + .5) + "h3" }); });

  volList.forEach(function (t, i) {
    var top = 600 + (+t.slice(1)) / 3;
    body(vol, t[0], cx(i), top, 884.5);
  });
  line(vol, "ma ma10", [["v", "10,115 28,145 49,120 67,150 85,210 107,270 124,275 145,325 163,350 182,337 202,331 220,330 241,335 259,355 277,388 298,385 316,360 338,335 355,290 373,250 394,212 412,245 433,260 451,285 469,335 490,372 508,375 529,378 547,388 565,383 586,380 604,390 625,408 643,410 661,425 682,440 700,465 721,450 739,472 760,482 778,510 796,492 814,525 832,538 850,538 868,525 886,530 904,530 930,530 950,540 970,550 990,578 1010,581 1050,580 1080,570 1105,566 1130,575 1150,578 1180,595 1200,578 1230,558 1260,548 1275,552 1295,582 1315,585 1340,555 1365,535 1395,505 1410,515 1430,545 1450,575 1470,562 1490,570"], ["w", "0,560 28,560 50,570 90,605 120,630 160,645 190,650 220,643 320,640 350,657 410,658 440,635 470,607 500,604 530,620 560,653 610,655 640,620 670,610 710,610 730,620 780,605 820,583 860,580 880,540 910,530 940,510 958,510 975,540 1020,542 1050,583 1070,585 1105,617 1145,612 1180,640 1220,655 1245,673 1262,665 1280,635 1310,628 1350,634"]]);
  line(vol, "ma ma20", [["v", "10,172 28,185 49,192 67,196 85,193 107,193 124,210 145,222 163,245 182,272 202,300 220,307 241,330 259,352 277,365 298,358 316,352 338,335 355,325 373,320 394,300 412,300 433,295 451,290 476,290 490,295 508,310 529,322 547,335 565,355 586,375 604,385 625,395 643,400 661,402 682,415 700,427 721,430 739,440 760,455 778,462 796,472 814,490 832,508 850,512 868,518 890,512 910,525 930,530 950,535 970,540 990,553 1010,558 1050,560 1070,570 1090,573 1130,575 1180,580 1200,572 1230,568 1260,568 1295,582 1315,578 1340,555 1365,540 1395,542 1410,549 1430,552 1450,560 1470,545 1490,535"], ["w", "0,538 20,545 50,570 70,570 90,585 130,600 170,620 210,640 320,642 350,650 410,650 440,645 470,632 510,630 560,632 600,630 620,633 650,632 700,633 760,608 820,604 850,604 880,570 930,550 980,540 1030,536 1070,565 1120,585 1160,605 1200,630 1240,640 1270,642 1320,645 1335,653 1350,650"]]);
  mark(vol, 465, 762, true);

  /* time axis and scale frame */
  add(vol, "path", { "class": "frame", d: "M980.500 599V904M0 888.500H1031" });
  [[105, "4"], [240, "5"], [367, "6"], [490, "7"], [637, "8"], [778, "9"], [906, "10"]].forEach(function (t) {
    add(vol, "path", { "class": "tick", d: "M" + (t[0] + .5) + " 889V904" });
    add(vol, "text", { "class": "time-label", x: t[0] + 2, y: 901 }, t[1]);
  });
  [33, 66, 139, 172, 206, 271, 303, 335, 403, 440, 470, 525, 562, 600, 670, 708, 743, 806, 837, 870, 940].forEach(function (x) {
    add(vol, "path", { "class": "tick", d: "M" + (x + .5) + " 889v3" });
  });
  add(vol, "text", { "class": "time-label", x: 3, y: 901 }, "2019年");
  add(vol, "rect", { "class": "unit-box", x: 981.5, y: 873.5, width: 29, height: 15 });
  add(vol, "text", { "class": "time-label", x: 983, y: 885 }, "X1万");
  add(vol, "text", { "class": "axis-plain", x: 992, y: 901 }, "日线");
})();
```
